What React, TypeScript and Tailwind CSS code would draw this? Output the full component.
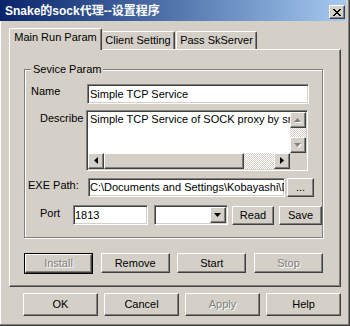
import React from "react";

const face = "bg-[#d4d0c8]";
const raised =
  "border border-t-white border-l-white border-r-[#404040] border-b-[#404040] shadow-[inset_-1px_-1px_#808080]";
const sunken =
  "border border-t-[#808080] border-l-[#808080] border-r-white border-b-white p-[1px] shadow-[inset_1px_1px_#404040,inset_-1px_-1px_#d4d0c8]";
const checker =
  "bg-[image:repeating-conic-gradient(#ffffff_0_25%,#d4d0c8_0_50%)] bg-[length:2px_2px]";

function Btn({
  label,
  className,
  disabled,
}: {
  label: string;
  className: string;
  disabled?: boolean;
}) {
  return (
    <button
      type="button"
      className={`${raised} ${face} flex items-center justify-center ${className} ${
        disabled ? "text-[#808080] [text-shadow:1px_1px_0_#fff]" : "text-black"
      }`}
    >
      {label}
    </button>
  );
}

// little arrow glyphs used on scroll / combo buttons
function Arrow({ dir, dim }: { dir: "up" | "down" | "left" | "right"; dim?: boolean }) {
  const pts: Record<string, string> = {
    up: "3.5,0 7,4 0,4",
    down: "0,0 7,0 3.5,4",
    left: "4,0 4,7 0,3.5",
    right: "0,0 4,3.5 0,7",
  };
  const vertical = dir === "up" || dir === "down";
  return (
    <svg
      width={vertical ? 8 : 5}
      height={vertical ? 5 : 8}
      viewBox={vertical ? "0 0 8 5" : "0 0 5 8"}
    >
      {dim && <polygon points={pts[dir]} fill="#ffffff" transform="translate(1,1)" />}
      <polygon points={pts[dir]} fill={dim ? "#808080" : "#000000"} />
    </svg>
  );
}

function ScrollBtn({ dir, dim }: { dir: "up" | "down" | "left" | "right"; dim?: boolean }) {
  return (
    <div className={`${raised} ${face} w-[16px] h-[16px] shrink-0 flex items-center justify-center`}>
      <Arrow dir={dir} dim={dim} />
    </div>
  );
}

function CloseBtn() {
  const cells = [
    "XX....XX",
    ".XX..XX.",
    "..XXXX..",
    "...XX...",
    "..XXXX..",
    ".XX..XX.",
    "XX....XX",
  ];
  return (
    <div className={`${raised} ${face} w-[16px] h-[14px] mr-[1px] flex items-center justify-center`}>
      <svg width="8" height="7" viewBox="0 0 8 7" shapeRendering="crispEdges">
        {cells.map((row, y) =>
          row.split("").map((c, x) =>
            c === "X" ? <rect key={`${x}-${y}`} x={x} y={y} width="1" height="1" fill="#000" /> : null
          )
        )}
      </svg>
    </div>
  );
}

export default function App() {
  return (
    <div className="w-[350px] h-[326px] bg-[#d4d0c8] flex flex-col overflow-hidden shadow-[inset_-1px_-1px_#404040,inset_-2px_-2px_#808080,inset_1px_0_#ffffff] font-['Liberation_Sans',Arial,sans-serif] text-[11px] leading-[13px] text-black select-none">
      {/* title bar */}
      <div className="w-[346px] h-[21px] shrink-0 flex items-end justify-between pb-[2px] pl-[5px] bg-linear-to-r from-[#0a246a] to-[#a6caf0]">
        <span className="font-bold text-[12px] leading-[15px] text-white font-['Liberation_Sans','Noto_Sans_CJK_SC',sans-serif]">
          Snake的sock代理--设置程序
        </span>
        <CloseBtn />
      </div>

      <div className="ml-[9px] w-[332px] mt-[7px]">
        {/* tabs */}
        <div className="flex items-end h-[21px]">
          <div className="relative z-10 w-[93px] h-[22px] -mb-[1px] bg-[#d4d0c8] border-t border-l border-r border-t-white border-l-white border-r-[#404040] rounded-t-[2px] shadow-[inset_-1px_0_#808080] flex justify-center pt-[2px]">
            Main Run Param
          </div>
          <div className="w-[73px] h-[18px] border-t border-r border-t-white border-r-[#404040] rounded-t-[2px] shadow-[inset_-1px_0_#808080] flex justify-center pt-[2px]">
            Client Setting
          </div>
          <div className="ml-[1px] w-[81px] h-[18px] border-t border-l border-r border-t-white border-l-white border-r-[#404040] rounded-t-[2px] shadow-[inset_-1px_0_#808080] flex justify-center pt-[2px]">
            Pass SkServer
          </div>
        </div>

        {/* tab page */}
        <div className={`${raised} h-[238px] pl-[14px] pt-[12px]`}>
          <fieldset className="w-[299px] border border-[#808080] shadow-[inset_1px_1px_#ffffff,1px_1px_#ffffff] pb-[12px]">
            <legend className="ml-[6px] px-[2px] leading-[14px] bg-[#d4d0c8]">Sevice Param</legend>

            {/* Name */}
            <div className="flex items-start h-[20px] mt-[8px]">
              <span className="ml-[6px] w-[56px] pt-[1px]">Name</span>
              <div className={`${sunken} w-[222px] h-[20px] bg-white flex items-center pl-[2px]`}>
                Simple TCP Service
              </div>
            </div>

            {/* Describe */}
            <div className="flex items-start mt-[6px]">
              <span className="ml-[15px] w-[46px] pt-[2px]">Describe</span>
              <div className={`${sunken} w-[222px] h-[61px] flex flex-col`}>
                <div className="flex flex-1">
                  <div className="flex-1 bg-white pl-[2px] pt-[1px] whitespace-nowrap overflow-hidden">
                    Simple TCP Service of SOCK proxy by snake
                  </div>
                  <div className="w-[16px] flex flex-col">
                    <ScrollBtn dir="up" dim />
                    <div className={`flex-1 ${checker}`} />
                    <ScrollBtn dir="down" dim />
                  </div>
                </div>
                <div className="flex h-[16px]">
                  <ScrollBtn dir="left" />
                  <div className={`${raised} ${face} w-[140px] h-[16px]`} />
                  <div className={`flex-1 ${checker}`} />
                  <ScrollBtn dir="right" />
                  <div className={`w-[16px] h-[16px] ${face}`} />
                </div>
              </div>
            </div>

            {/* EXE Path */}
            <div className="flex items-start mt-[7px]">
              <span className="ml-[3px] w-[60px] -mt-[1px] pt-[2px]">EXE Path:</span>
              <div className={`${sunken} w-[197px] h-[19px] bg-white flex items-center whitespace-nowrap overflow-hidden`}>
                C:\Documents and Settings\Kobayashi\Desktop\sock.exe
              </div>
              <Btn label="..." className="ml-[2px] w-[27px] h-[19px] items-end pb-[2px]" />
            </div>

            {/* Port */}
            <div className="flex items-start mt-[8px]">
              <span className="ml-[15px] w-[33px] pt-[2px]">Port</span>
              <div className={`${sunken} w-[75px] h-[20px] bg-white flex items-center pl-[1px]`}>1813</div>
              <div className={`${sunken} ml-[6px] w-[74px] h-[20px] bg-white flex justify-end`}>
                <ScrollBtn dir="down" />
              </div>
              <Btn label="Read" className="ml-[4px] mt-[1px] w-[42px] h-[19px]" />
              <Btn label="Save" className="ml-[5px] mt-[1px] w-[43px] h-[19px]" />
            </div>
          </fieldset>

          {/* service buttons */}
          <div className="w-[299px] mt-[15px] flex justify-between items-start">
            <div className="w-[69px] h-[21px] border border-black">
              <Btn label="Install" disabled className="w-full h-full" />
            </div>
            <Btn label="Remove" className="w-[69px] h-[20px]" />
            <Btn label="Start" className="w-[69px] h-[20px]" />
            <Btn label="Stop" disabled className="w-[69px] h-[20px]" />
          </div>
        </div>
      </div>

      {/* dialog buttons */}
      <div className="ml-[23px] mt-[6px] flex gap-[6px]">
        <Btn label="OK" className="w-[75px] h-[23px]" />
        <Btn label="Cancel" className="w-[75px] h-[23px]" />
        <Btn label="Apply" disabled className="w-[75px] h-[23px]" />
        <Btn label="Help" className="w-[75px] h-[23px]" />
      </div>
    </div>
  );
}
